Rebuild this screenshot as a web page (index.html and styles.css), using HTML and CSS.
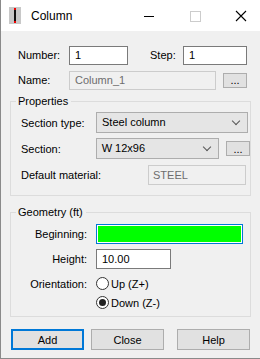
FILE: index.html
```html
<!DOCTYPE html>
<html>
<head>
    <link rel="stylesheet" href="styles.css">
</head>
<body>
    <div class="window">
        <!-- Title bar -->
        <div class="titlebar">
            <div class="app-icon"><span class="bar"></span></div>
            <div class="title">Column</div>
            <div class="caption-btns">
                <svg class="cap" width="46" height="30" viewBox="0 0 46 30"><path d="M18 15.5h10" stroke="#000" stroke-width="1"/></svg>
                <svg class="cap" width="46" height="30" viewBox="0 0 46 30"><rect x="18.5" y="10.5" width="10" height="10" fill="none" stroke="#ccc"/></svg>
                <svg class="cap" width="46" height="30" viewBox="0 0 46 30"><path d="M18 10l10 10M28 10l-10 10" stroke="#000" stroke-width="1.1"/></svg>
            </div>
        </div>

        <div class="body">
            <div class="row first">
                <label class="lbl-top">Number:</label>
                <div class="field w-num">1</div>
                <label class="lbl-step">Step:</label>
                <div class="field w-step">1</div>
            </div>
            <div class="row name-row">
                <label class="lbl-top">Name:</label>
                <div class="field disabled w-name">Column_1</div>
                <button class="dots">...</button>
            </div>

            <fieldset class="group props">
                <legend>Properties</legend>
                <div class="row">
                    <label class="lbl-prop">Section type:</label>
                    <div class="combo w-type">Steel column<span class="chev"></span></div>
                </div>
                <div class="row">
                    <label class="lbl-prop">Section:</label>
                    <div class="combo w-sec">W 12x96<span class="chev"></span></div>
                    <button class="dots">...</button>
                </div>
                <div class="row">
                    <label class="lbl-mat">Default material:</label>
                    <div class="field disabled w-mat">STEEL</div>
                </div>
            </fieldset>

            <fieldset class="group geom">
                <legend>Geometry (ft)</legend>
                <div class="row">
                    <label class="lbl-geo">Beginning:</label>
                    <div class="color-field"></div>
                </div>
                <div class="row">
                    <label class="lbl-geo">Height:</label>
                    <div class="field w-height">10.00</div>
                </div>
                <div class="row radio-row">
                    <label class="lbl-geo">Orientation:</label>
                    <span class="radio"></span><span class="radio-text">Up (Z+)</span>
                </div>
                <div class="row radio-row">
                    <span class="lbl-geo"></span>
                    <span class="radio checked"></span><span class="radio-text">Down (Z-)</span>
                </div>
            </fieldset>

            <div class="buttons">
                <button class="btn default">Add</button>
                <button class="btn">Close</button>
                <button class="btn help">Help</button>
            </div>
        </div>
    </div>
</body>
</html>
```

FILE: styles.css
```css
body {
    margin: 0;
    font-family: "Liberation Sans", Arial, sans-serif;
    font-size: 11px;
    color: #000;
    background: #3a6b3a;
}
.window {
    width: 259px;
    height: 358px;
    background: #f0f0f0;
    border-left: 1px solid #8a8a8a;
    border-bottom: 1px solid #8a8a8a;
    overflow: hidden;
}
.titlebar {
    height: 31px;
    background: #fff;
    display: flex;
    align-items: center;
}
.app-icon {
    width: 12px;
    height: 17px;
    margin-left: 8px;
    background: #c8c8c8;
    display: flex;
    justify-content: center;
}
.app-icon .bar {
    width: 2px;
    height: 15px;
    margin-top: 1px;
    background: #111;
    border-top: 2px solid #e00;
    border-bottom: 2px solid #e00;
    box-sizing: border-box;
}
.title {
    margin-left: 10px;
    font-size: 12px;
    flex: 1;
}
.caption-btns {
    display: flex;
    margin-right: -4px;
}
.cap {
    display: block;
}
.body {
    padding: 14px 0 0 0;
}
.row {
    display: flex;
    align-items: center;
}
.first {
    height: 20px;
    padding-left: 17px;
}
.name-row {
    height: 20px;
    padding-left: 17px;
    margin-top: 5px;
}
label, .lbl-geo {
    display: block;
}
.lbl-top {
    width: 51px;
}
.lbl-step {
    width: 33px;
    margin-left: 22px;
}
.field {
    height: 19px;
    box-sizing: border-box;
    border: 1px solid #7a7a7a;
    background: #fff;
    padding-left: 5px;
    line-height: 17px;
}
.field.disabled {
    border-color: #cccccc;
    background: #f0f0f0;
    color: #6d6d6d;
}
.w-num { width: 59px; }
.w-step { width: 64px; }
.w-name { width: 147px; }
.w-mat { width: 98px; height: 20px; line-height: 18px; padding-left: 4px; }
.w-height { width: 75px; height: 20px; line-height: 18px; }
.dots {
    width: 24px;
    height: 15px;
    margin-left: 7px;
    padding: 0;
    font-family: inherit;
    font-size: 11px;
    line-height: 8px;
    background: #e1e1e1;
    border: 1px solid #adadad;
    color: #000;
}
.group {
    margin: 0 9px 0 9px;
    padding: 0;
    border: 1px solid #dcdcdc;
    min-width: 0;
}
.group legend {
    margin-left: 5px;
    padding: 0 3px 0 2px;
    line-height: 16px;
}
.props {
    margin-top: 3px;
    height: 103px;
    box-sizing: border-box;
}
.props .row {
    padding-left: 10px;
    height: 21px;
    margin-top: 5px;
}
.props .row:first-of-type {
    margin-top: 3px;
}
.lbl-prop {
    width: 75px;
}
.lbl-mat {
    width: 127px;
}
.combo {
    position: relative;
    height: 21px;
    box-sizing: border-box;
    border: 1px solid #adadad;
    background: #e5e5e5;
    padding-left: 5px;
    line-height: 19px;
}
.w-type { width: 152px; }
.w-sec { width: 124px; }
.chev {
    position: absolute;
    right: 8px;
    top: 5px;
    width: 5px;
    height: 5px;
    border-right: 1px solid #555;
    border-bottom: 1px solid #555;
    transform: rotate(45deg);
}
.geom {
    margin-top: 8px;
    height: 113px;
    box-sizing: border-box;
}
.geom .row {
    height: 20px;
    margin-top: 5px;
}
.geom .row:first-of-type {
    margin-top: 4px;
}
.lbl-geo {
    width: 76px;
    text-align: right;
    margin-right: 9px;
}
.color-field {
    width: 147px;
    height: 20px;
    box-sizing: border-box;
    border: 1px solid #0078d7;
    outline: 1px solid #fff;
    outline-offset: -2px;
    background: #00ff00;
}
.geom .radio-row {
    height: 13px;
    margin-top: 8px;
}
.geom .radio-row + .radio-row {
    margin-top: 6px;
}
.radio {
    width: 13px;
    height: 13px;
    box-sizing: border-box;
    border: 1px solid #333;
    border-radius: 50%;
    background: #fff;
    display: flex;
    align-items: center;
    justify-content: center;
}
.radio.checked::after {
    content: "";
    width: 7px;
    height: 7px;
    border-radius: 50%;
    background: #222;
}
.radio-text {
    margin-left: 2px;
}
.buttons {
    display: flex;
    padding-left: 10px;
    margin-top: 12px;
}
.btn {
    width: 73px;
    height: 21px;
    padding: 0;
    font-family: inherit;
    font-size: 11px;
    color: #000;
    background: #e1e1e1;
    border: 1px solid #adadad;
    margin-right: 7px;
}
.btn.default {
    border: 2px solid #0078d7;
}
.btn.help {
    margin-left: 6px;
}
```
